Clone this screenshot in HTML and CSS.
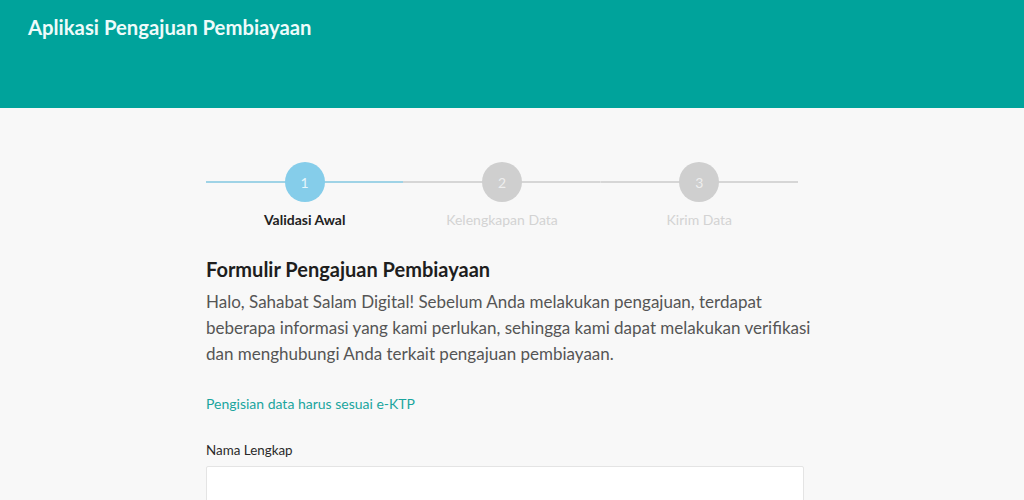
FILE: index.html
```html
<!DOCTYPE html>
<html lang="id">
<head>
<meta charset="utf-8">
<title>Aplikasi Pengajuan Pembiayaan</title>
<link rel="stylesheet" href="styles.css">
</head>
<body>
<header class="topbar">
  <h1 class="app-title">Aplikasi Pengajuan Pembiayaan</h1>
</header>
<main class="content">
  <ol class="stepper">
    <li class="step step-active">
      <div class="step-track"><span class="step-dot">1</span></div>
      <span class="step-label">Validasi Awal</span>
    </li>
    <li class="step">
      <div class="step-track"><span class="step-dot">2</span></div>
      <span class="step-label">Kelengkapan Data</span>
    </li>
    <li class="step">
      <div class="step-track"><span class="step-dot">3</span></div>
      <span class="step-label">Kirim Data</span>
    </li>
  </ol>
  <h2 class="form-title">Formulir Pengajuan Pembiayaan</h2>
  <p class="intro">Halo, Sahabat Salam Digital! Sebelum Anda melakukan pengajuan, terdapat beberapa informasi yang kami perlukan, sehingga kami dapat melakukan verifikasi dan menghubungi Anda terkait pengajuan pembiayaan.</p>
  <p class="note">Pengisian data harus sesuai e-KTP</p>
  <label class="field-label" for="nama">Nama Lengkap</label>
  <input class="field-input" id="nama" type="text">
</main>
</body>
</html>
```
FILE: styles.css
```css
html, body {
  margin: 0;
  padding: 0;
}
body {
  background: #f8f8f8;
  font-family: Lato, "Open Sans", "Liberation Sans", sans-serif;
  color: #333;
  overflow: hidden;
}
.topbar {
  background: #00a39b;
  height: 108px;
  padding: 14px 28px 0;
  box-sizing: border-box;
}
.app-title {
  margin: 0;
  color: #eefbfa;
  font-size: 20.3px;
  font-weight: 700;
  line-height: 26px;
}
.content {
  width: 598px;
  margin-left: 206px;
  padding-top: 54px;
}
.stepper {
  list-style: none;
  margin: 0;
  padding: 0;
  display: flex;
  width: 592px;
}
.step {
  flex: 1;
  display: flex;
  flex-direction: column;
  align-items: center;
}
.step-track {
  width: 100%;
  display: flex;
  justify-content: center;
  background: linear-gradient(#d6d6d6, #d6d6d6) center / 100% 2px no-repeat;
}
.step-active .step-track {
  background-image: linear-gradient(#9fd3e6, #9fd3e6);
}
.step-dot {
  width: 40px;
  height: 40px;
  border-radius: 50%;
  background: #cfcfcf;
  color: #eee;
  font-size: 14px;
  display: flex;
  align-items: center;
  justify-content: center;
}
.step-active .step-dot {
  background: #85cdea;
  color: #e6f6fc;
}
.step-label {
  margin-top: 9px;
  font-size: 14px;
  line-height: 18px;
  color: #d3d3d3;
}
.step-active .step-label {
  color: #222;
  font-weight: 700;
}
.form-title {
  margin: 28px 0 0;
  font-size: 20px;
  line-height: 24px;
  font-weight: 700;
  color: #1e1e1e;
}
.intro {
  margin: 8px 0 0;
  width: 614px;
  font-size: 17px;
  line-height: 26px;
  color: #555;
}
.note {
  margin: 29px 0 0;
  font-size: 14px;
  line-height: 16px;
  color: #1aa59e;
}
.field-label {
  display: block;
  margin-top: 30px;
  font-size: 13.4px;
  line-height: 16px;
  color: #2a2a2a;
}
.field-input {
  display: block;
  margin-top: 8px;
  width: 598px;
  height: 44px;
  box-sizing: border-box;
  background: #fff;
  border: 1px solid #e4e4e4;
  border-radius: 2px;
}
```
